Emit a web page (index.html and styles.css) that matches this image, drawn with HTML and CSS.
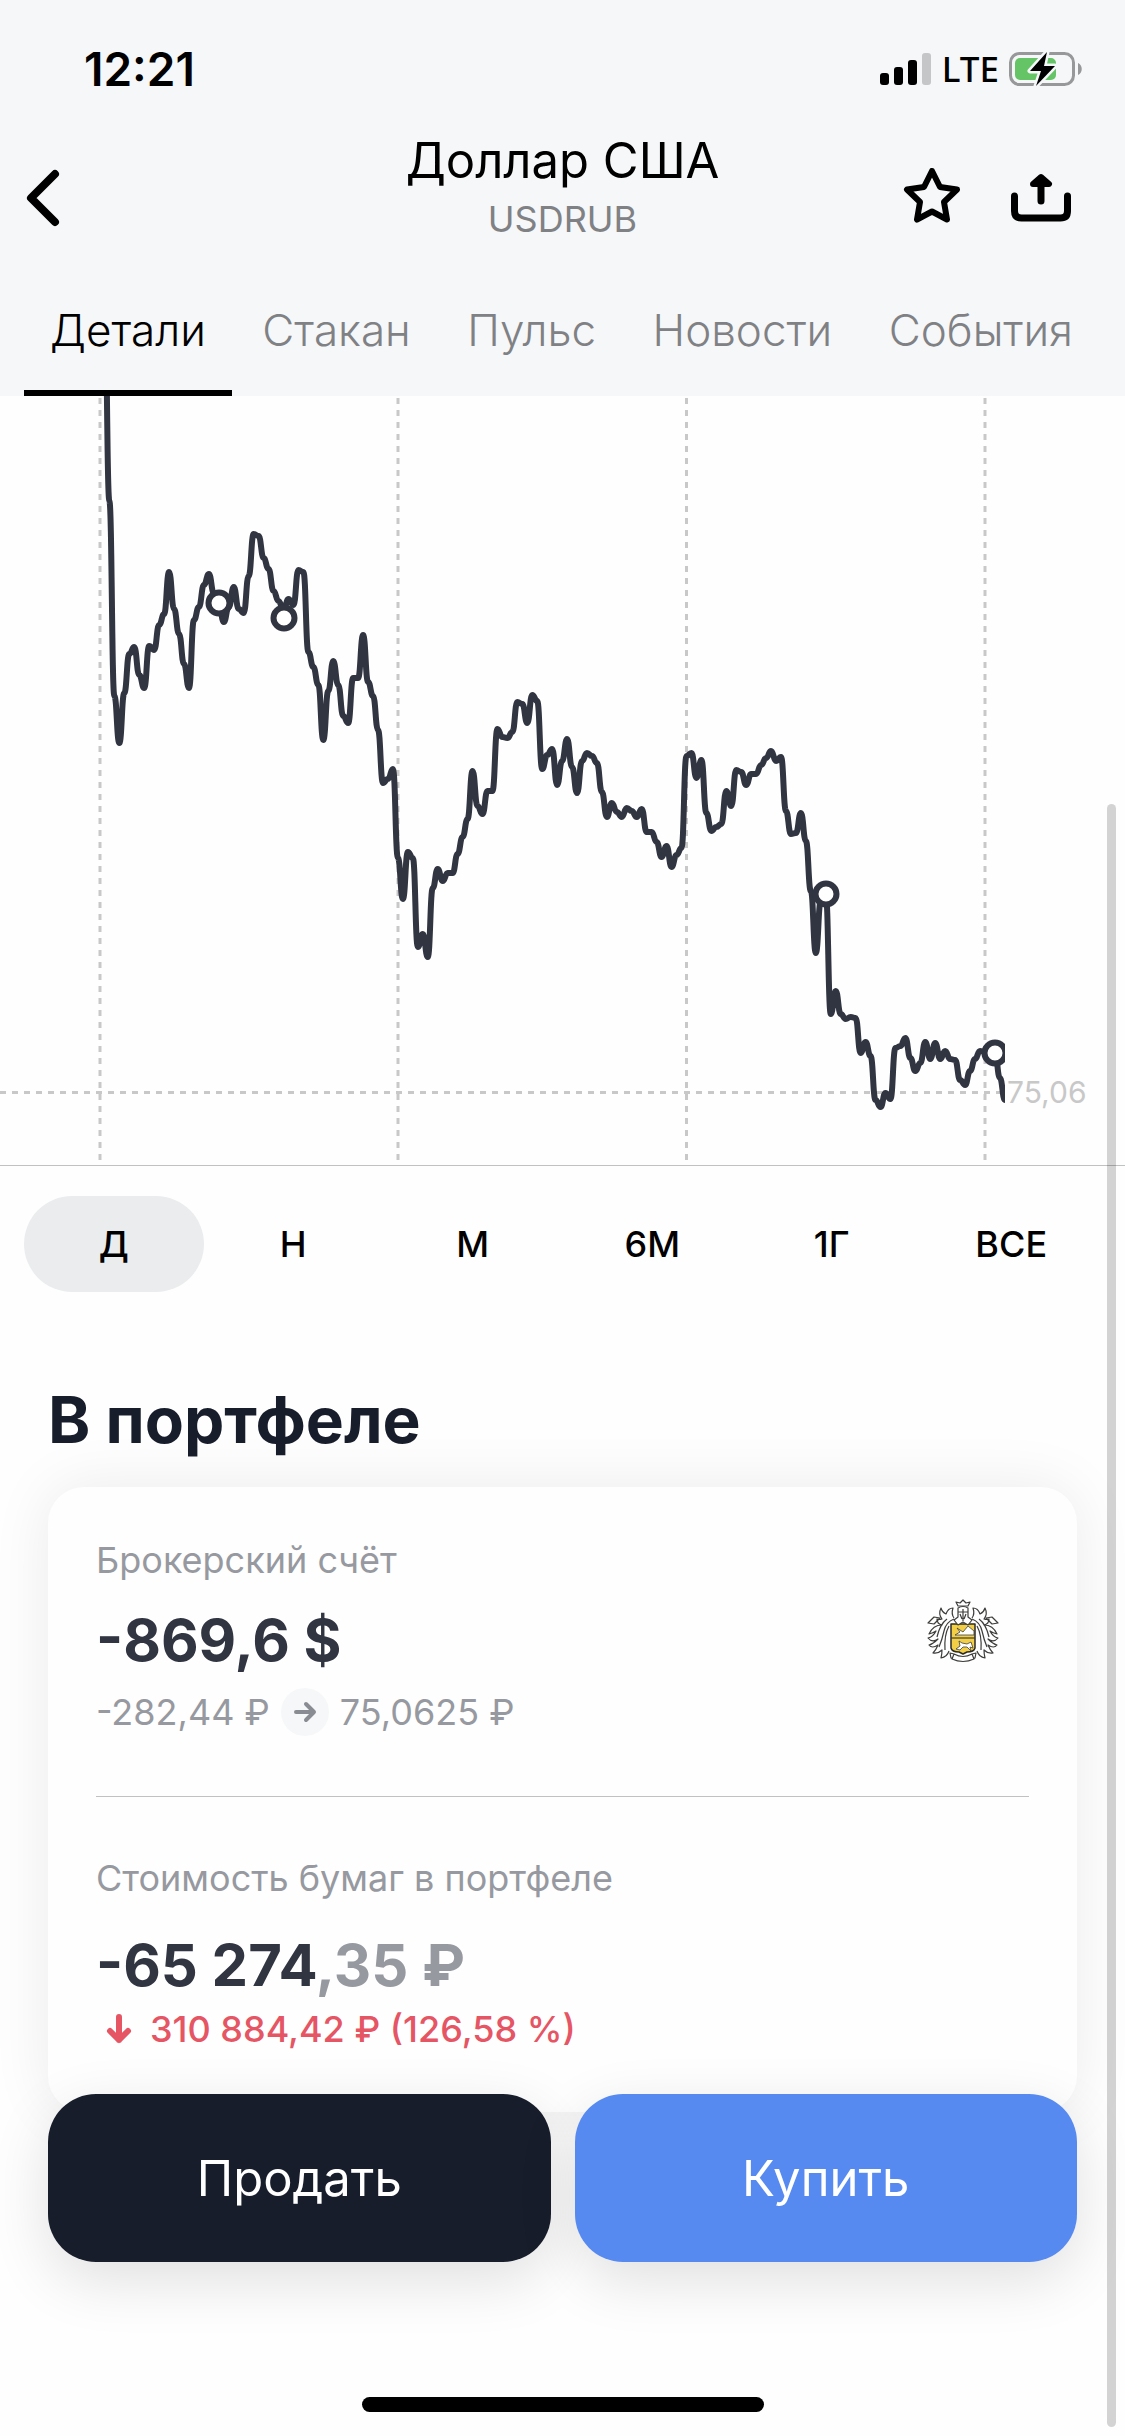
FILE: index.html
```html
<!DOCTYPE html>
<html lang="ru">

<head>
    <meta charset="UTF-8" />
    <meta name="viewport" content="width=device-width, initial-scale=1.0" />
    <title>Доллар США</title>
    <link rel="stylesheet" href="styles.css">
</head>

<body>
    <header class="header">
        <div class="status-bar">
            <span class="time">12:21</span>
            <div class="status-icons">
                <svg class="signal" width="52" height="34" viewBox="0 0 52 34">
                    <rect x="0" y="21" width="9" height="12" rx="3" />
                    <rect x="14" y="15" width="9" height="18" rx="3" />
                    <rect x="28" y="8" width="9" height="25" rx="3" />
                    <rect x="42" y="1" width="9" height="32" rx="3" fill="#c5c6c7" />
                </svg>
                <span class="network">LTE</span>
                <svg class="battery" width="74" height="38" viewBox="0 0 74 38">
                    <rect x="1.5" y="3.5" width="63" height="31" rx="9" fill="none" stroke="#97989a" stroke-width="3" />
                    <path d="M69 13c5 2 5 10 0 12z" fill="#97989a" />
                    <rect x="6" y="8" width="41" height="22" rx="5" fill="#65c466" />
                    <path d="M38 2 21 21h11l-5 15 19-20H35z" fill="#000" stroke="#f6f7f9" stroke-width="5" stroke-linejoin="round" paint-order="stroke" />
                </svg>
            </div>
        </div>

        <div class="nav-bar">
            <button class="icon-button back" aria-label="Назад">
                <svg width="40" height="60" viewBox="0 0 40 60">
                    <path d="M31 6 7 30l24 24" fill="none" stroke="#000" stroke-width="8" stroke-linecap="round" stroke-linejoin="round" />
                </svg>
            </button>
            <div class="title">
                <h1>Доллар США</h1>
                <p>USDRUB</p>
            </div>
            <div class="actions">
                <button class="icon-button" aria-label="В избранное">
                    <svg width="60" height="60" viewBox="0 0 60 60">
                        <path d="M31 3l8 16 17 2.500-13 12.500 3 17.500-15-8-15 8 3-17.500-13-12.500 17-2.500z" fill="none" stroke="#000" stroke-width="6" stroke-linejoin="round" />
                    </svg>
                </button>
                <button class="icon-button" aria-label="Поделиться">
                    <svg width="60" height="60" viewBox="0 0 60 60">
                        <path d="M3.500 28v15q0 7 7 7h39q7 0 7-7V28" fill="none" stroke="#000" stroke-width="7" stroke-linecap="round" />
                        <path d="M30 33V14" stroke="#000" stroke-width="7" stroke-linecap="round" />
                        <path d="M22 16 30 9l8 7z" stroke="#000" stroke-width="6" stroke-linejoin="round" />
                    </svg>
                </button>
            </div>
        </div>

        <nav class="tabs">
            <a href="#" class="tab active">Детали</a>
            <a href="#" class="tab">Стакан</a>
            <a href="#" class="tab">Пульс</a>
            <a href="#" class="tab">Новости</a>
            <a href="#" class="tab">События</a>
        </nav>
    </header>

    <main>
        <!-- Price chart -->
        <div class="chart">
            <svg viewBox="0 0 1125 769">
                <defs>
                    <clipPath id="plot">
                        <rect x="0" y="0" width="1005" height="769" />
                    </clipPath>
                </defs>
                <g class="grid">
                    <path d="M100 2V766M398 2V766M686.500 2V766M985 2V766" />
                    <path d="M0 696.500H1005" />
                </g>
                <g clip-path="url(#plot)">
                    <path class="price-line" id="priceLine" />
                    <g class="deal">
                        <circle cx="219" cy="207" r="10.500" />
                        <circle cx="284" cy="222" r="10.500" />
                        <circle cx="826" cy="498" r="10.500" />
                        <circle cx="995" cy="657" r="10.500" />
                    </g>
                </g>
                <text class="price-label" x="1007" y="707">75,06</text>
            </svg>
        </div>

        <div class="periods">
            <button class="period selected">Д</button>
            <button class="period">Н</button>
            <button class="period">М</button>
            <button class="period">6М</button>
            <button class="period">1Г</button>
            <button class="period">ВСЕ</button>
        </div>

        <!-- Portfolio section -->
        <h2 class="section-title">В портфеле</h2>
        <div class="card">
            <div class="account">
                <div class="account-info">
                    <p class="label">Брокерский счёт</p>
                    <p class="amount">-869,6 $</p>
                    <div class="rates">
                        <span>-282,44 ₽</span>
                        <svg width="48" height="48" viewBox="0 0 48 48">
                            <circle cx="24" cy="24" r="24" fill="#f6f7f8" />
                            <path d="M15 24h18M25 16l8 8-8 8" fill="none" stroke="#8a8c93" stroke-width="4" stroke-linecap="round" stroke-linejoin="round" />
                        </svg>
                        <span>75,0625 ₽</span>
                    </div>
                </div>
                <div class="account-logo">
                    <svg width="72" height="76" viewBox="0 0 72 76" fill="none" stroke="#3d3d3b" stroke-width="1.200" stroke-linejoin="round">
                        <!-- left leaves -->
                        <path d="M27 19q-3-4-1-10-5 0-7 6-4-2-5-6-3 6 1 11-3 1-5 0 0 5 5 6-9 0-13 9 4-1 7-3-3 6-8 7 4 5 10 1-5 5-9 6 3 4 9 0-2 5-5 8 5 1 9-3 0 4-1 8 6-1 8-7" />
                        <path d="M27 20q-8 3-10 12t-5 16M20 20q-7 5-10 18M22 27q-5 9-4 24M1 24l6-6 6 1-6 6z" />
                        <!-- right leaves -->
                        <path d="M45 19q3-4 1-10 5 0 7 6 4-2 5-6 3 6-1 11 3 1 5 0 0 5-5 6 9 0 13 9-4-1-7-3 3 6 8 7-4 5-10 1 5 5 9 6-3 4-9 0 2 5 5 8-5 1-9-3 0 4 1 8-6-1-8-7" />
                        <path d="M45 20q8 3 10 12t5 16M52 20q7 5 10 18M50 27q5 9 4 24M71 24l-6-6-6 1 6 6z" />
                        <!-- shield -->
                        <path d="M24 25h24v24q-1 4-8 4l-4 2-4-2q-7 0-8-4z" fill="#f3cf46" stroke="#2b2b28" stroke-width="1.500" />
                        <path d="M24 39h24" />
                        <path d="M28 36l5-3-3-4 6 4 5-6 6 5v4z" fill="#fff" stroke-width="0.800" />
                        <path d="M29 50l4-3-1-5 3 2 5 1 4-2 2 6-3-1 1 4-4-4h-4l-3 3z" fill="#fff" stroke-width="0.800" />
                        <!-- helmet and crown -->
                        <path d="M31 9q5-3 10 0v9l4 3-4 5-5-3-5 3-4-5 4-3z" fill="#fff" />
                        <path d="M31 13h10M36 10v12M33 15l2 5M39 15l-2 5" />
                        <path d="M31 7l-2-4 4 1 3-3 3 3 4-1-2 4z" fill="#fff" />
                        <!-- ribbon -->
                        <path d="M27 55q9 5 18 0l2 5q-11 5-22 0zM27 55l-4-1 1 5 2 1M45 55l4-1-1 5-2 1" fill="#fff" />
                    </svg>
                </div>
            </div>
            <div class="value">
                <p class="label">Стоимость бумаг в портфеле</p>
                <p class="amount">-65 274<span>,35 ₽</span></p>
                <div class="change">
                    <svg width="26" height="32" viewBox="0 0 26 32">
                        <path d="M13 4v23M4 18l9 9 9-9" fill="none" stroke="#e55564" stroke-width="6" stroke-linecap="round" stroke-linejoin="round" />
                    </svg>
                    <span>310 884,42 ₽ (126,58 %)</span>
                </div>
            </div>
        </div>
    </main>

    <footer class="bottom-bar">
        <div class="trade-buttons">
            <button class="trade-button sell">Продать</button>
            <button class="trade-button buy">Купить</button>
        </div>
        <div class="home-indicator"></div>
    </footer>
    <div class="scroll-thumb"></div>

    <script>
        // Line heights from left to right, in chart units
        const points = [
            -110, 105, 300, 347, 297, 258, 251, 279, 292, 250, 254, 229, 218, 176, 213, 238, 268, 292, 224, 211,
            189, 178, 197, 207, 226, 211, 191, 213, 217, 180, 138, 140, 162, 173, 195, 205, 214, 203, 209, 174,
            176, 256, 271, 289, 344, 295, 265, 289, 320, 327, 282, 282, 239, 286, 300, 334, 387, 383, 373, 462,
            503, 456, 462, 551, 538, 561, 492, 473, 485, 477, 477, 458, 441, 423, 375, 410, 418, 395, 395, 333,
            341, 342, 336, 306, 308, 327, 299, 305, 373, 359, 353, 389, 365, 343, 371, 397, 365, 357, 360, 367,
            396, 421, 407, 416, 421, 412, 415, 421, 413, 436, 436, 446, 461, 450, 471, 459, 452, 360, 357, 382,
            364, 417, 435, 431, 428, 395, 410, 374, 376, 389, 378, 378, 369, 362, 355, 365, 361, 415, 438, 437,
            417, 445, 495, 557, 505, 498, 618, 595, 618, 623, 621, 622, 657, 646, 660, 704, 711, 697, 703, 652,
            650, 642, 662, 675, 667, 646, 663, 647, 663, 655, 663, 664, 684, 689, 675, 663, 655, 656, 657, 657,
            682, 704
        ];
        const startX = 104.4;
        const step = 4.975;

        let path = `M${startX} ${points[0]}`;
        for (let i = 1; i < points.length; i++) {
            const x = startX + i * step;
            const middle = x - step / 2;
            path += `C${middle} ${points[i - 1]} ${middle} ${points[i]} ${x} ${points[i]}`;
        }
        document.getElementById("priceLine").setAttribute("d", path);
    </script>
</body>

</html>
```
FILE: styles.css
```css
* {
    box-sizing: border-box;
}

body {
    margin: 0;
    min-height: 100vh;
    font-family: Inter, "Liberation Sans", sans-serif;
    font-size: 36px;
    background-color: #fefefe;
    color: #000;
}

h1,
h2,
p {
    margin: 0;
}

button {
    font-family: inherit;
    border: none;
    cursor: pointer;
}

svg {
    display: block;
}

/* Header */
.header {
    background-color: #f6f7f9;
}

.status-bar {
    display: flex;
    justify-content: space-between;
    align-items: center;
    height: 132px;
    padding: 6px 42px 0 84px;
}

.time {
    font-size: 46px;
    font-weight: 600;
}

.status-icons {
    display: flex;
    align-items: center;
    gap: 10px;
}

.network {
    font-family: "Noto Sans", sans-serif;
    font-size: 35px;
    font-weight: 500;
    line-height: 36px;
}

.nav-bar {
    display: grid;
    grid-template-columns: 1fr auto 1fr;
    align-items: center;
    height: 132px;
    padding: 0 54px 0 24px;
}

.icon-button {
    padding: 0;
    background: none;
}

.back {
    justify-self: start;
}

.title {
    align-self: start;
    padding-left: 30px;
    line-height: 58px;
    text-align: center;
}

.title h1 {
    font-size: 49px;
    font-weight: 400;
}

.title p {
    color: #808184;
}

.actions {
    display: flex;
    justify-content: flex-end;
    gap: 50px;
}

.tabs {
    display: flex;
    justify-content: space-between;
    height: 132px;
    padding: 0 26px 0 24px;
}

.tab {
    padding: 0 26px;
    border-bottom: 6px solid transparent;
    font-size: 44px;
    font-weight: 300;
    line-height: 132px;
    color: #808184;
    text-decoration: none;
}

.tab.active {
    border-color: #000;
    color: #000;
}

/* Chart */
.chart {
    border-bottom: 1px solid #c0c1c2;
}

.chart svg {
    width: 100%;
}

.grid path {
    fill: none;
    stroke: #c8c8c8;
    stroke-width: 3;
    stroke-dasharray: 6 6;
}

.price-line {
    fill: none;
    stroke: #303541;
    stroke-width: 6;
    stroke-linecap: round;
    stroke-linejoin: round;
}

.deal circle {
    fill: #fff;
    stroke: #303541;
    stroke-width: 6;
}

.price-label {
    font-size: 30px;
    fill: #c8c8c8;
}

.periods {
    display: grid;
    grid-template-columns: repeat(6, 1fr);
    padding: 30px 24px 0;
}

.period {
    height: 96px;
    border-radius: 48px;
    background: none;
    font-size: 36px;
    font-weight: 500;
    color: #000;
}

.period.selected {
    background-color: #eaecee;
}

/* Portfolio */
.section-title {
    margin: 88px 48px 27px;
    font-size: 64px;
    font-weight: 700;
    line-height: 80px;
    color: #171d2a;
}

.card {
    margin: 0 48px;
    padding: 0 48px;
    border-radius: 36px;
    background-color: #fefefe;
    box-shadow: 0 0 60px rgba(0, 0, 0, 0.08);
}

.account {
    display: flex;
    justify-content: space-between;
    align-items: center;
    padding: 51px 0 60px;
    border-bottom: 1px solid #c0c1c2;
}

.account-logo {
    display: flex;
    justify-content: center;
    width: 132px;
}

.label {
    line-height: 44px;
    color: #9799a0;
}

.amount {
    margin-top: 22px;
    font-size: 58px;
    font-weight: 700;
    line-height: 72px;
    color: #303541;
}

.amount span {
    color: #9799a0;
}

.rates {
    display: flex;
    align-items: center;
    gap: 11px;
    margin-top: 12px;
    line-height: 48px;
    color: #9799a0;
}

.value {
    padding: 59px 0 61px;
}

.value .amount {
    margin-top: 29px;
}

.change {
    display: flex;
    align-items: center;
    gap: 18px;
    margin-top: 6px;
    padding-left: 10px;
    font-weight: 500;
    line-height: 44px;
    color: #e55564;
}

/* Buttons stay over the content */
.bottom-bar {
    position: fixed;
    left: 0;
    right: 0;
    bottom: 0;
    padding: 0 48px 24px;
}

.trade-buttons {
    display: grid;
    grid-template-columns: 1fr 1fr;
    gap: 24px;
}

.trade-button {
    height: 168px;
    border-radius: 48px;
    box-shadow: 0 18px 60px rgba(0, 0, 0, 0.12);
    font-size: 49px;
    color: #fff;
}

.sell {
    background-color: #171d2a;
}

.buy {
    background-color: #568af1;
}

.home-indicator {
    width: 402px;
    height: 15px;
    margin: 135px auto 0;
    border-radius: 8px;
    background-color: #000;
}

.scroll-thumb {
    position: fixed;
    top: 33%;
    right: 9px;
    bottom: 9px;
    width: 9px;
    border-radius: 5px;
    background-color: rgba(0, 0, 0, 0.17);
}
```
